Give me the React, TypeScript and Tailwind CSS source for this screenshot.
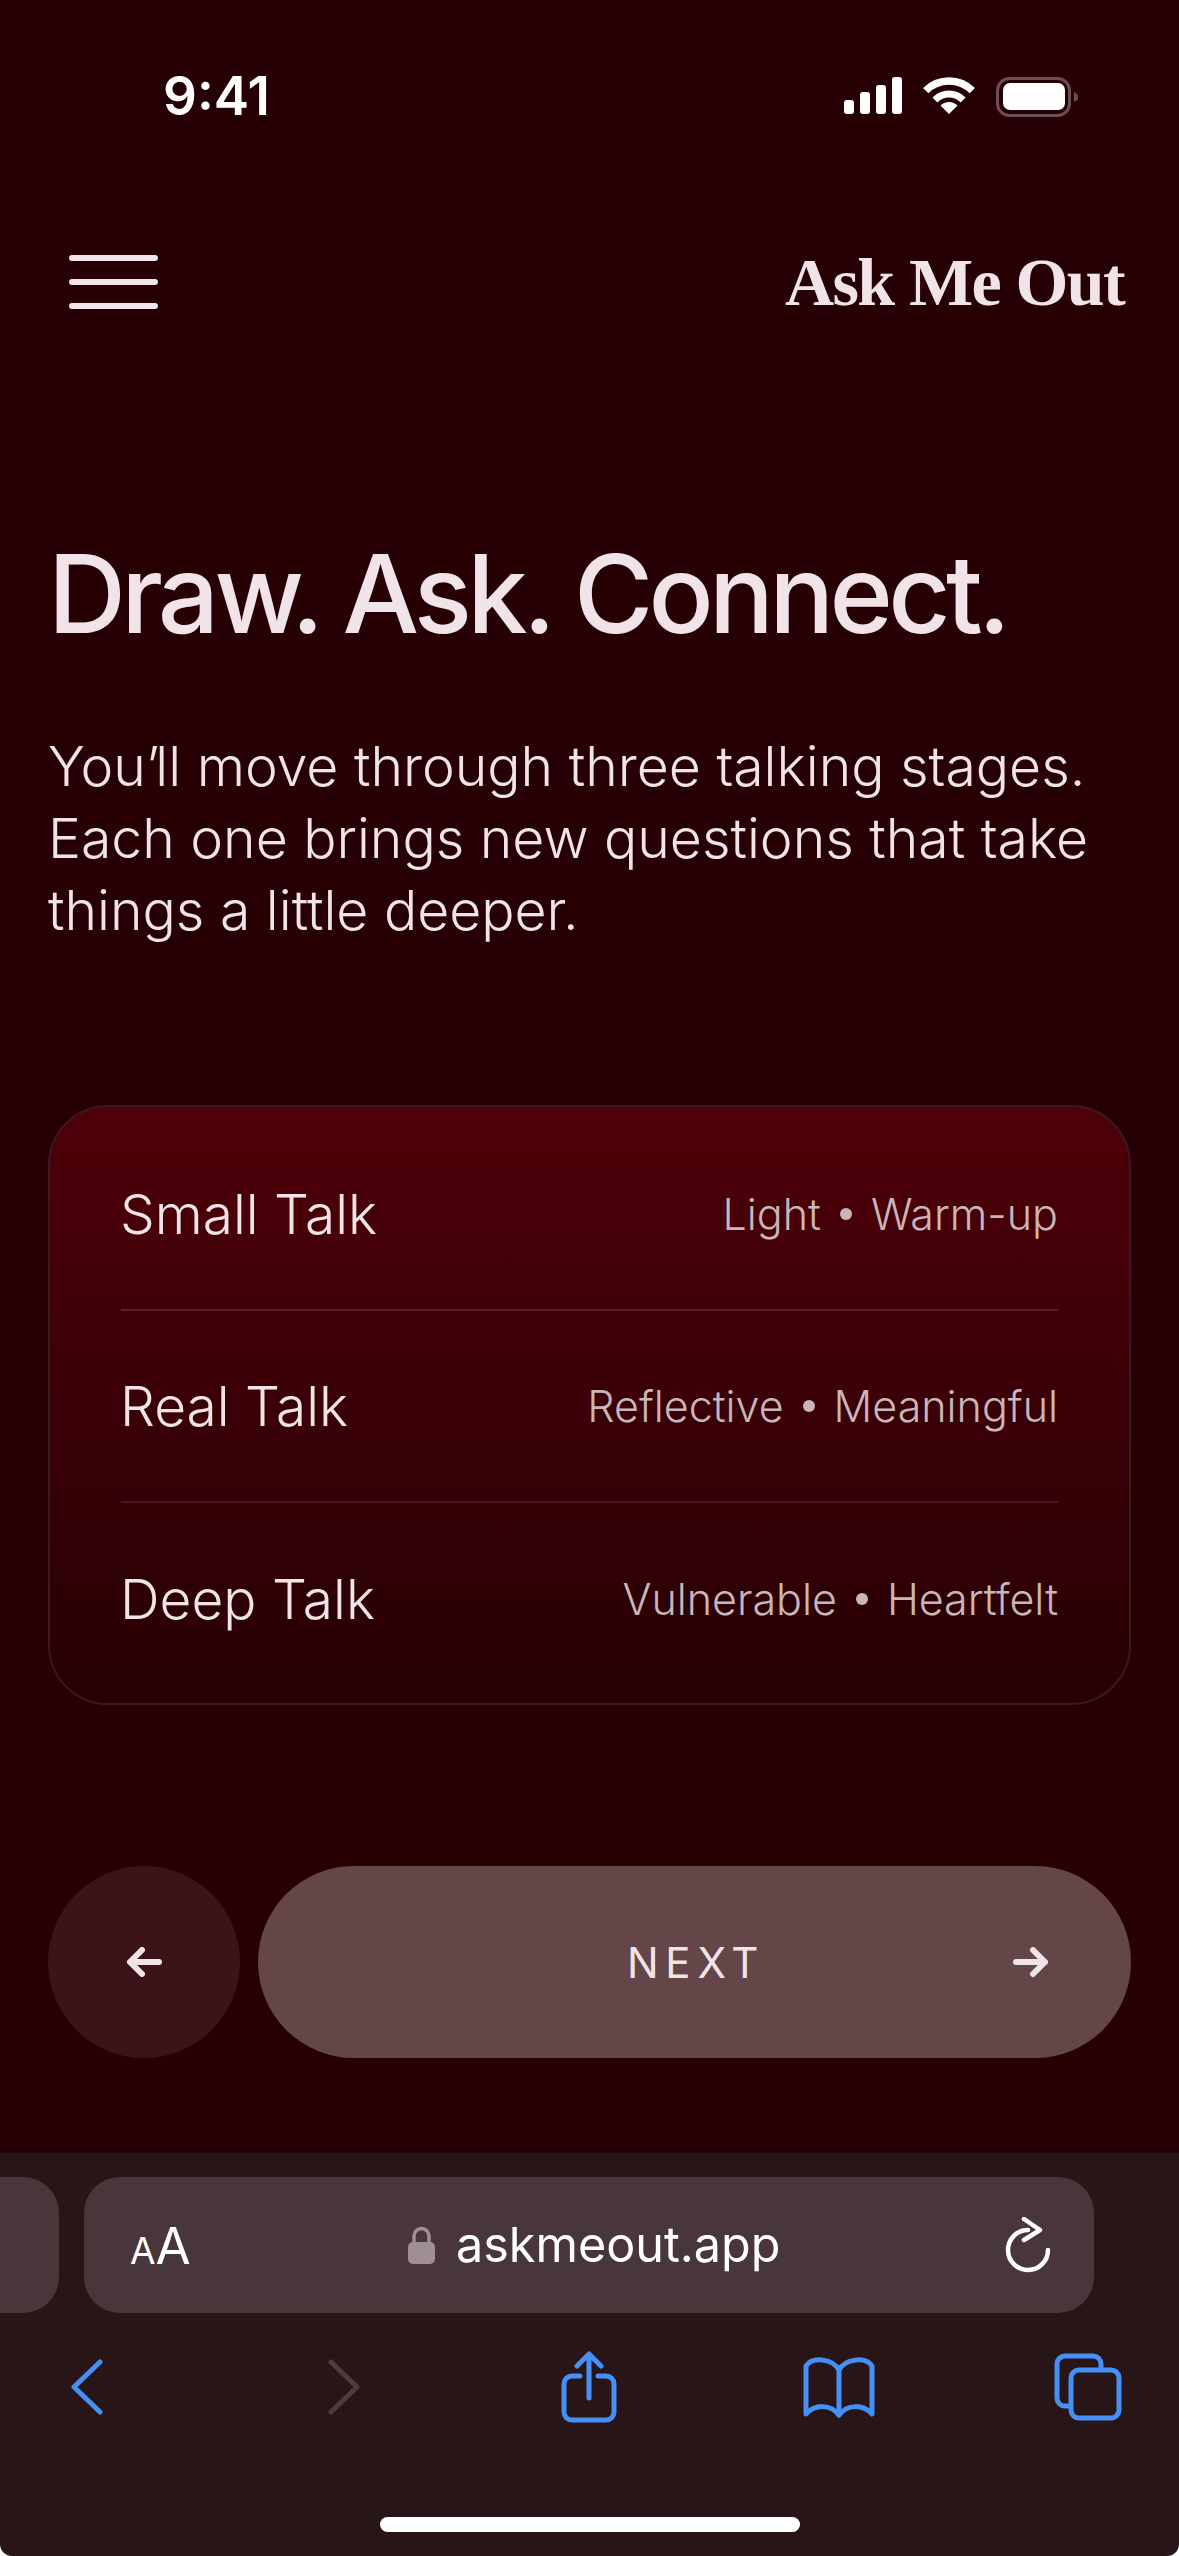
import React from 'react';

const stages = [
  { name: 'Small Talk', left: 'Light', right: 'Warm-up' },
  { name: 'Real Talk', left: 'Reflective', right: 'Meaningful' },
  { name: 'Deep Talk', left: 'Vulnerable', right: 'Heartfelt' },
];

function StatusIcons() {
  return (
    <div className="flex items-start">
      <svg width="58" height="37" viewBox="0 0 58 37" fill="#fff">
        <rect x="0" y="23" width="10" height="14" rx="3" />
        <rect x="16" y="15" width="10" height="22" rx="3" />
        <rect x="32" y="8" width="10" height="29" rx="3" />
        <rect x="48" y="0" width="10" height="37" rx="3" />
      </svg>
      <svg className="ml-[21px]" width="52" height="37" viewBox="0 0 52 37" fill="none" stroke="#fff">
        <path d="M2.7 13.7A33 33 0 0 1 49.3 13.7" strokeWidth="7.5" />
        <path d="M11.9 22.9A20 20 0 0 1 40.1 22.9" strokeWidth="7" />
        <path d="M26 37L17.5 28.5A12 12 0 0 1 34.5 28.5Z" fill="#fff" stroke="none" />
      </svg>
      <svg className="ml-[21px]" width="83" height="40" viewBox="0 0 83 40" fill="none">
        <rect x="1.5" y="1.5" width="72" height="37" rx="12" stroke="#6a4f54" strokeWidth="3" />
        <rect x="7" y="6" width="62" height="27" rx="7" fill="#fff" />
        <path d="M78 15C81 16 82 18 82 20C82 22 81 24 78 25Z" fill="#6a4f54" />
      </svg>
    </div>
  );
}

function Arrow({ flip }: { flip?: boolean }) {
  return (
    <svg width="36" height="30" viewBox="0 0 36 30" fill="none" stroke="#f0e4e8" strokeWidth="6" strokeLinecap="round" strokeLinejoin="round" className={flip ? 'rotate-180' : ''}>
      <path d="M3 15H32M20 3L32 15L20 27" />
    </svg>
  );
}

function Toolbar() {
  return (
    <div className="flex h-[403px] flex-col rounded-b-[12px] bg-[#281518]">
      <div className="mt-6 flex h-[136px] gap-[25px]">
        <div className="h-full w-[59px] rounded-r-[36px] bg-[#49363a]" />
        <div className="flex h-full w-[1010px] items-center rounded-[36px] bg-[#49363a] pl-[46px]">
          <div className="flex w-[60px] items-baseline text-white">
            <span className="text-[37px] leading-none">A</span>
            <span className="text-[51px] leading-none">A</span>
          </div>
          <div className="ml-[218px] flex items-center">
            <svg width="27" height="38" viewBox="0 0 27 38" fill="none">
              <path d="M6 18V10a7.5 7.5 0 0 1 15 0v8" stroke="#a08f92" strokeWidth="3.5" />
              <rect x="0" y="16" width="27" height="22" rx="5" fill="#a08f92" />
            </svg>
            <span className="ml-[21px] text-[48.5px] leading-none text-white">askmeout.app</span>
          </div>
          <svg className="ml-[224px]" width="48" height="56" viewBox="0 0 48 56" fill="none" stroke="#fff" strokeWidth="4.5" strokeLinecap="round" strokeLinejoin="round">
            <path d="M24 13A20 20 0 1 0 44 33" />
            <path d="M20 2L36 13L20 23" />
          </svg>
        </div>
      </div>
      <div className="mt-[38px] flex h-[72px] items-center pl-[71px]">
        <svg width="32" height="56" viewBox="0 0 32 56" fill="none" stroke="#4490f5" strokeWidth="5" strokeLinecap="round" strokeLinejoin="round">
          <path d="M29 3L3 28L29 53" />
        </svg>
        <svg className="ml-[225px]" width="32" height="56" viewBox="0 0 32 56" fill="none" stroke="#4e3b3f" strokeWidth="5" strokeLinecap="round" strokeLinejoin="round">
          <path d="M3 3L29 28L3 53" />
        </svg>
        <svg className="ml-[201px]" width="56" height="72" viewBox="0 0 56 72" fill="none" stroke="#4490f5" strokeWidth="5" strokeLinecap="round" strokeLinejoin="round">
          <path d="M19 25H11a8 8 0 0 0-8 8v28a8 8 0 0 0 8 8h34a8 8 0 0 0 8-8V33a8 8 0 0 0-8-8H37" />
          <path d="M28 47V3M16 15L28 3L40 15" />
        </svg>
        <svg className="ml-[186px]" width="72" height="62" viewBox="0 0 72 62" fill="none" stroke="#4490f5" strokeWidth="5" strokeLinecap="round" strokeLinejoin="round">
          <path d="M36 14C30 3 10 0 3 10V58C12 48 28 48 36 59C44 48 60 48 69 58V10C62 0 42 3 36 14Z" />
          <path d="M36 14V59" />
        </svg>
        <svg className="ml-[179px]" width="68" height="68" viewBox="0 0 68 68" fill="none" stroke="#4490f5" strokeWidth="5" strokeLinejoin="round">
          <path d="M15 53H11a8 8 0 0 1-8-8V11a8 8 0 0 1 8-8h28a8 8 0 0 1 8 8v4" />
          <rect x="17" y="17" width="48" height="48" rx="8" />
        </svg>
      </div>
      <div className="mx-auto mt-[94px] h-[15px] w-[420px] rounded-full bg-white" />
    </div>
  );
}

export default function App() {
  return (
    <div className="flex h-[2556px] w-[1179px] flex-col overflow-hidden bg-white font-['Inter',sans-serif] text-[#f0e4e8]">
      <div className="flex flex-1 flex-col bg-[#270005]">
        <div className="flex h-[255px] items-start justify-between pl-[163px] pr-[100px] pt-[77px]">
          <span className="text-[53px] font-semibold leading-[38px] text-white">9:41</span>
          <StatusIcons />
        </div>

        <header className="flex h-[54px] items-center justify-between pl-[69px] pr-[55px]">
          <div className="flex w-[89px] flex-col gap-[18px]">
            <div className="h-[6px] rounded-full bg-[#f0e4e8]" />
            <div className="h-[6px] rounded-full bg-[#f0e4e8]" />
            <div className="h-[6px] rounded-full bg-[#f0e4e8]" />
          </div>
          <span className="font-['Liberation_Serif',serif] text-[68px] font-bold leading-none tracking-[-1.6px]">Ask Me Out</span>
        </header>

        <main className="flex flex-1 flex-col px-[48px]">
          <h1 className="mt-[220px] text-[108px] font-medium leading-[130px] tracking-[-4.7px]">Draw. Ask. Connect.</h1>
          <p className="mt-[71px] text-[55.3px] font-light leading-[72px] text-[#f0e4e8]">
            You<span className="tracking-[-4px]">’</span>ll move through three talking stages.
            <br />
            Each one brings new questions that take
            <br />
            things a little deeper.
          </p>

          <section className="mt-[159px] h-[600px] rounded-[60px] border-2 border-[#3a1a20] bg-gradient-to-b from-[#4f0009] to-[#270005] px-[71px]">
            {stages.map((s, i) => (
              <div key={s.name} className={`flex h-[192px] items-center justify-between ${i === 0 ? 'mt-[12px] border-b-2 border-[#55222b]' : i === 1 ? 'border-b-2 border-[#43191f]' : ''}`}>
                <span className="-ml-[1px] text-[55px] font-light">{s.name}</span>
                <span className="flex items-center gap-[19px] text-[43px] font-light text-[#c9b6ba]">
                  {s.left}
                  <span className="h-[12px] w-[12px] rounded-full bg-[#c9b6ba]" />
                  {s.right}
                </span>
              </div>
            ))}
          </section>

          <div className="mt-[161px] flex h-[192px] gap-[18px]">
            <button className="flex w-[192px] items-center justify-center rounded-full bg-[#3b1419]">
              <Arrow flip />
            </button>
            <button className="relative flex flex-1 items-center justify-center rounded-full bg-[#644548] pl-[3px]">
              <span className="text-[42px] font-normal tracking-[6.8px]">NEXT</span>
              <span className="absolute right-[82px] top-[81px]">
                <Arrow />
              </span>
            </button>
          </div>
        </main>
      </div>

      <Toolbar />
    </div>
  );
}
